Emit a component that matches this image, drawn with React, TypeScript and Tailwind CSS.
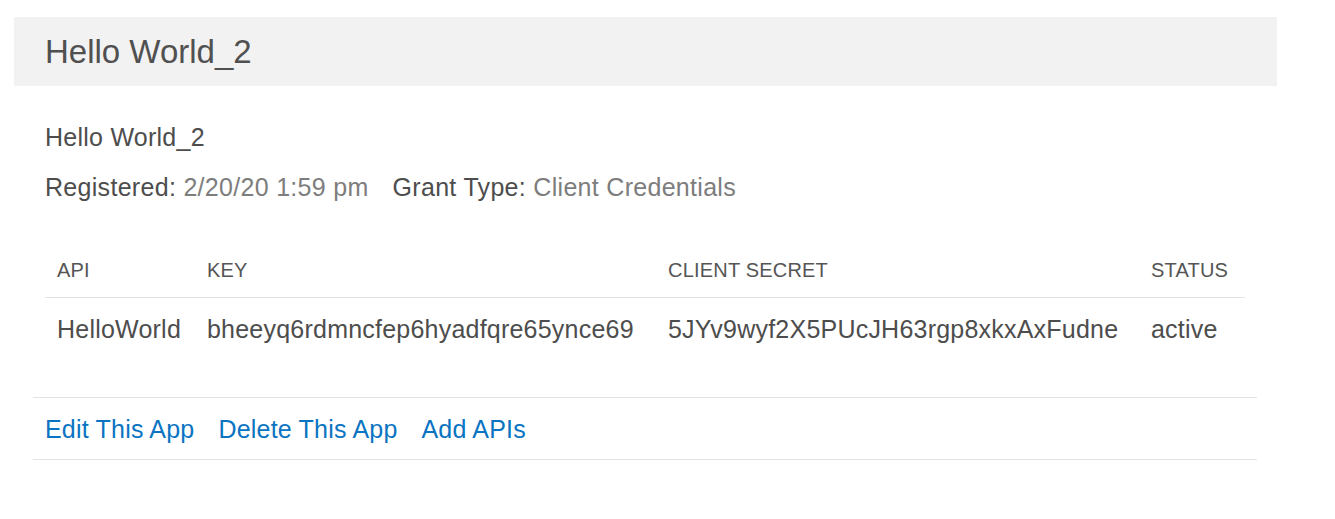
const rows = [
  {
    api: "HelloWorld",
    key: "bheeyq6rdmncfep6hyadfqre65ynce69",
    secret: "5JYv9wyf2X5PUcJH63rgp8xkxAxFudne",
    status: "active",
  },
];

const cols = "grid grid-cols-[150px_461px_483px_106px]";

export default function App() {
  return (
    <div className="min-h-[519px] bg-white pt-[17px] font-['Liberation_Sans',Arial,sans-serif] text-[#4d4d4d]">
      <div className="ml-[14px] flex h-[69px] w-[1263px] items-center bg-[#f2f2f2] pl-[31px]">
        <h1 className="text-[33px] leading-none text-[#505050]">Hello World_2</h1>
      </div>

      <div className="ml-[33px] w-[1224px]">
        <div className="px-3 pt-[36px]">
          <p className="text-[25px] leading-[30px] tracking-[0.25px]">Hello World_2</p>
          <p className="mt-[20px] flex gap-[24px] text-[25px] leading-[30px] tracking-[0.3px]">
            <span>
              Registered: <span className="text-[#7d7d7d]">2/20/20 1:59 pm</span>
            </span>
            <span>
              Grant Type: <span className="text-[#7d7d7d]">Client Credentials</span>
            </span>
          </p>

          <div className="mt-[53px] w-[1200px]">
            <div className={`${cols} border-b border-[#e3e3e3] pb-[12px] text-[20px] leading-[30px] tracking-[0.2px] text-[#555]`}>
              <div className="px-3">API</div>
              <div className="px-3">KEY</div>
              <div className="px-3">CLIENT SECRET</div>
              <div className="px-3">STATUS</div>
            </div>
            {rows.map((r) => (
              <div key={r.key} className={`${cols} pt-[16px] text-[25px] leading-[30px] tracking-[0.22px]`}>
                <div className="px-3">{r.api}</div>
                <div className="px-3">{r.key}</div>
                <div className="whitespace-nowrap px-3">{r.secret}</div>
                <div className="px-3">{r.status}</div>
              </div>
            ))}
          </div>
        </div>

        <div className="mt-[53px] flex gap-[24px] border-y border-[#e3e3e3] px-3 pt-[16px] pb-[15px] text-[25px] leading-[30px] tracking-[0.2px] text-[#0a74c2]">
          <a href="#">Edit This App</a>
          <a href="#">Delete This App</a>
          <a href="#">Add APIs</a>
        </div>
      </div>
    </div>
  );
}
